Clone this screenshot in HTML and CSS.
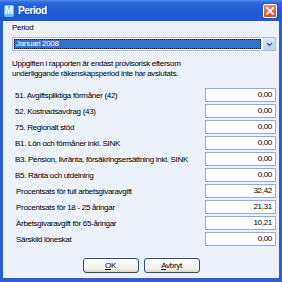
FILE: index.html
```html
<!DOCTYPE html>
<html lang="sv">
<head>
    <meta charset="UTF-8">
    <title>Period</title>
    <link rel="stylesheet" href="styles.css">
</head>
<body>

    <div class="window">
        <div class="titlebar">
            <span class="app-icon">M</span>
            <span class="title">Period</span>
            <span class="close">
                <svg width="10" height="10" viewBox="0 0 10 10">
                    <path d="M2 2 L8 8 M8 2 L2 8" stroke="#fff" stroke-width="1.8" stroke-linecap="square"/>
                </svg>
            </span>
        </div>

        <div class="content">
            <div class="field-label">Period</div>
            <div class="select">
                <div class="select-value"><span>Januari 2008</span></div>
                <div class="select-arrow">
                    <svg width="7" height="5" viewBox="0 0 7 5">
                        <path d="M1 1 L3.5 3.5 L6 1" stroke="#4d6185" stroke-width="1.4" fill="none"/>
                    </svg>
                </div>
            </div>

            <p class="note">Uppgiften i rapporten är endast provisorisk eftersom underliggande räkenskapsperiod inte har avslutats.</p>

            <div class="rows">
                <div class="row"><span>51. Avgiftspliktiga förmåner (42)</span><div class="value">0,00</div></div>
                <div class="row"><span>52. Kostnadsavdrag (43)</span><div class="value">0,00</div></div>
                <div class="row"><span>75. Regionalt stöd</span><div class="value">0,00</div></div>
                <div class="row"><span>B1. Lön och förmåner inkl. SINK</span><div class="value">0,00</div></div>
                <div class="row"><span>B3. Pension, livränta, försäkringsersättning inkl. SINK</span><div class="value">0,00</div></div>
                <div class="row"><span>B5. Ränta och utdelning</span><div class="value">0,00</div></div>
                <div class="row plain"><span>Procentsats för full arbetsgivaravgift</span><div class="value">32,42</div></div>
                <div class="row plain"><span>Procentsats för 18 - 25 åringar</span><div class="value">21,31</div></div>
                <div class="row plain"><span>Arbetsgivaravgift för 65-åringar</span><div class="value">10,21</div></div>
                <div class="row plain"><span>Särskild löneskat</span><div class="value">0,00</div></div>
            </div>

            <div class="buttons">
                <button><u>O</u>K</button>
                <button><u>A</u>vbryt</button>
            </div>
        </div>
    </div>

</body>
</html>
```

FILE: styles.css
```css
body {
    margin: 0;
    font-family: "Liberation Sans", Arial, sans-serif;
    background-color: #2a5fd3;
}
.window {
    width: 282px;
    height: 282px;
    display: flex;
    flex-direction: column;
    background-color: #2a5fd3;
}
.titlebar {
    height: 21px;
    display: flex;
    align-items: center;
    padding: 0 5px 0 4px;
    background: linear-gradient(#4f8cf0 0px, #2a64d9 3px, #215bd4 12px, #1d56cf 21px);
    color: white;
}
.app-icon {
    width: 10px;
    height: 12px;
    border-radius: 2px;
    background-color: #5fc6ee;
    color: #ffffff;
    font-size: 10px;
    font-weight: bold;
    line-height: 12px;
    text-align: center;
}
.title {
    margin-left: 4px;
    font-size: 10px;
    font-weight: bold;
    letter-spacing: -0.4px;
    flex: 1;
}
.close {
    width: 12px;
    height: 12px;
    display: flex;
    align-items: center;
    justify-content: center;
    border: 1px solid #ffffff;
    border-radius: 2px;
    background: linear-gradient(#f08a62, #de4b22);
}
.content {
    flex: 1;
    margin: 0 3px 4px 3px;
    padding: 2px 3px 0 9px;
    background-color: #edf1fa;
    font-size: 8px;
    letter-spacing: -0.3px;
    color: #000;
}
.field-label {
    line-height: 10px;
}
.select {
    margin-top: 4px;
    display: flex;
    border: 1px solid #a9bde0;
    background-color: #ffffff;
    box-sizing: border-box;
    height: 14px;
}
.select-value {
    flex: 1;
    padding: 1px;
    display: flex;
}
.select-value span {
    flex: 1;
    background-color: #3472d1;
    color: #ffffff;
    outline: 1px dotted #1a1a1a;
    outline-offset: -1px;
    line-height: 10px;
    padding-left: 2px;
}
.select-arrow {
    width: 12px;
    display: flex;
    align-items: center;
    justify-content: center;
    background: linear-gradient(#dde8fc, #bcd0f5);
    border-left: 1px solid #ffffff;
}
.note {
    margin: 8px 0 0 0;
    line-height: 10px;
    padding-right: 76px;
}
.rows {
    margin-top: 9px;
    display: flex;
    flex-direction: column;
    gap: 2px;
}
.row {
    height: 14px;
    display: flex;
    align-items: center;
    padding-left: 3px;
}
.row.plain {
    padding-left: 4px;
}
.row span {
    flex: 1;
    white-space: nowrap;
}
.value {
    width: 71px;
    height: 14px;
    box-sizing: border-box;
    border: 1px solid #8fb0dc;
    background-color: #ffffff;
    text-align: right;
    padding-right: 3px;
    line-height: 12px;
}
.buttons {
    margin-top: 12px;
    display: flex;
    justify-content: center;
    gap: 5px;
    padding-right: 6px;
}
button {
    width: 56px;
    height: 15px;
    padding: 0;
    font-family: "Liberation Sans", Arial, sans-serif;
    font-size: 8px;
    letter-spacing: -0.3px;
    color: #000;
    border: 1px solid #2b4e87;
    border-radius: 3px;
    background: linear-gradient(#ffffff, #f3f3ef 70%, #d8d6cc);
}
```
